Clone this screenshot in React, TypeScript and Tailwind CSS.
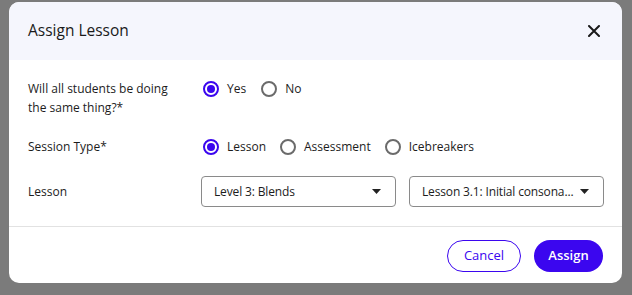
import React from "react";

const Radio = ({ checked, label }: { checked?: boolean; label: string }) => (
  <label className="flex items-center gap-[8px]">
    <span
      className={
        "flex h-[16px] w-[16px] items-center justify-center rounded-full border-2 " +
        (checked ? "border-[#3b06ef]" : "border-[#6b6b6b]")
      }
    >
      {checked && <span className="h-[8px] w-[8px] rounded-full bg-[#3b06ef]" />}
    </span>
    <span>{label}</span>
  </label>
);

const Select = ({ value }: { value: string }) => (
  <div className="flex h-[31px] w-[195px] items-center justify-between rounded-[4px] border border-[#8a8a8a] pl-[12px] pr-[14px]">
    <span className="whitespace-nowrap tracking-[-0.15px]">{value}</span>
    <svg width="9" height="5" viewBox="0 0 9 5" className="ml-[4px] shrink-0">
      <path d="M0 0 L9 0 L4.5 5 Z" fill="#222" />
    </svg>
  </div>
);

export default function App() {
  return (
    <div
      className="flex h-[295px] w-[632px] items-start bg-[#7b7b7b] pl-[9px] pt-[2px] text-[12px] text-[#1c1c1c]"
      style={{ fontFamily: '"Open Sans", sans-serif' }}
    >
      <div className="flex h-[281px] w-[613px] flex-col overflow-hidden rounded-[10px] bg-white">
        <div className="flex h-[58px] items-center justify-between bg-[#f5f6fd] pl-[19px] pr-[22px]">
          <span className="text-[15.5px] font-medium text-[#1a1a1a]">Assign Lesson</span>
          <svg width="12" height="12" viewBox="0 0 12 12">
            <path d="M1 1 L11 11 M11 1 L1 11" stroke="#1a1a1a" strokeWidth="2" strokeLinecap="round" />
          </svg>
        </div>
        <div className="flex flex-col pl-[19px] pr-[18px] pt-[19px]">
          <div className="flex">
            <div className="w-[175px] leading-[19px]">
              Will all students be doing
              <br />
              the same thing?*
            </div>
            <div className="flex h-[19px] gap-[15px]">
              <Radio checked label="Yes" />
              <Radio label="No" />
            </div>
          </div>
          <div className="mt-[20px] flex h-[19px] items-center">
            <div className="w-[175px]">Session Type*</div>
            <div className="flex gap-[14px]">
              <Radio checked label="Lesson" />
              <Radio label="Assessment" />
              <Radio label="Icebreakers" />
            </div>
          </div>
          <div className="mt-[20px] flex items-center">
            <div className="w-[173px]">Lesson</div>
            <div className="flex gap-[13px]">
              <Select value="Level 3: Blends" />
              <Select value="Lesson 3.1: Initial consona..." />
            </div>
          </div>
        </div>
        <div className="mt-[19px] border-t border-[#e2e2e2]" />
        <div className="flex justify-end gap-[13px] pr-[19px] pt-[13px]">
          <button className="h-[32px] w-[74px] rounded-full border border-[#3b06ef] text-[13px] font-medium text-[#3b06ef]">
            Cancel
          </button>
          <button className="h-[32px] w-[69px] rounded-full bg-[#3b06ef] text-[13px] font-semibold text-white">
            Assign
          </button>
        </div>
      </div>
    </div>
  );
}
